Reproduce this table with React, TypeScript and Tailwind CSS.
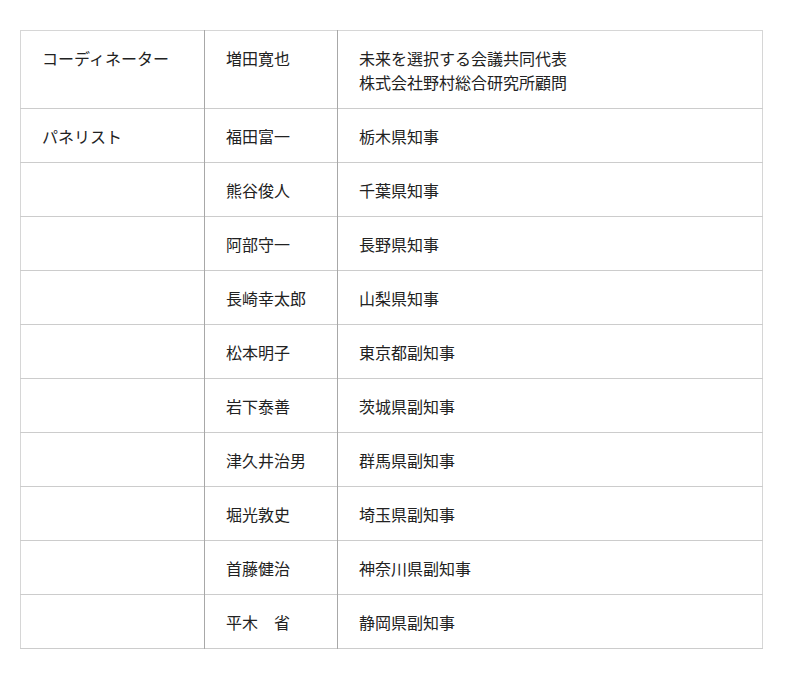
import React from "react";

const rows: [string, string, string[]][] = [
  ["コーディネーター", "増田寛也", ["未来を選択する会議共同代表", "株式会社野村総合研究所顧問"]],
  ["パネリスト", "福田富一", ["栃木県知事"]],
  ["", "熊谷俊人", ["千葉県知事"]],
  ["", "阿部守一", ["長野県知事"]],
  ["", "長崎幸太郎", ["山梨県知事"]],
  ["", "松本明子", ["東京都副知事"]],
  ["", "岩下泰善", ["茨城県副知事"]],
  ["", "津久井治男", ["群馬県副知事"]],
  ["", "堀光敦史", ["埼玉県副知事"]],
  ["", "首藤健治", ["神奈川県副知事"]],
  ["", "平木　省", ["静岡県副知事"]],
];

export default function App() {
  return (
    <div
      className="w-[800px] h-[680px] bg-white pt-[30px] pl-[20px] text-[#222] text-[16px] leading-[24px]"
      style={{ fontFamily: '"Noto Sans CJK JP", "Noto Sans", sans-serif' }}
    >
      <table className="w-[742px] border-collapse table-fixed border border-[#d6d6d6]">
        <colgroup>
          <col className="w-[184px]" />
          <col className="w-[133px]" />
          <col className="w-[425px]" />
        </colgroup>
        <tbody>
          {rows.map(([a, b, c], i) => (
            <tr key={i} className="border-b border-[#cccccc]">
              <td className="align-top px-[21px] pt-[15px] pb-[14px] border-r border-[#a8a8a8]">{a}</td>
              <td className="align-top px-[21px] pt-[15px] pb-[14px] border-r border-[#a8a8a8]">{b}</td>
              <td className="align-top px-[21px] pt-[15px] pb-[14px]">
                {c.map((t, j) => (
                  <div key={j}>{t}</div>
                ))}
              </td>
            </tr>
          ))}
        </tbody>
      </table>
    </div>
  );
}
